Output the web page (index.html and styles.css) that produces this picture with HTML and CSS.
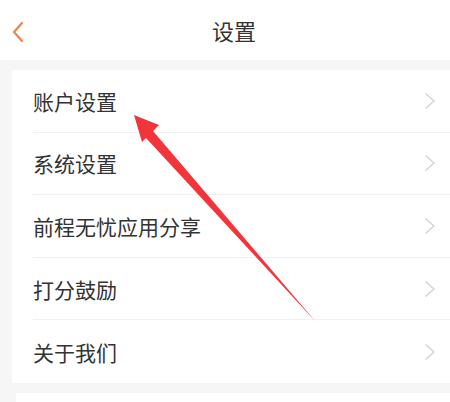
FILE: index.html
```html
<!DOCTYPE html>
<html lang="zh-CN">
<head>
    <meta charset="UTF-8">
    <meta name="viewport" content="width=device-width, initial-scale=1.0">
    <title>设置</title>
    <link rel="stylesheet" href="styles.css">
</head>
<body>
    <div class="page">
        <!-- Header -->
        <div class="header">
            <svg class="back" width="14" height="24" viewBox="0 0 14 24">
                <path d="M11 3 L3 12 L11 21" fill="none" stroke="#ec8550" stroke-width="2.2" stroke-linecap="round" stroke-linejoin="round"/>
            </svg>
            <div class="title">设置</div>
        </div>

        <!-- Settings list -->
        <div class="card">
            <div class="row"><span>账户设置</span><svg class="chev" width="12" height="18" viewBox="0 0 12 18"><path d="M1.5 1.5 L10 9 L1.5 16.5" fill="none" stroke="#d4d4d4" stroke-width="1.5"/></svg></div>
            <div class="row"><span>系统设置</span><svg class="chev" width="12" height="18" viewBox="0 0 12 18"><path d="M1.5 1.5 L10 9 L1.5 16.5" fill="none" stroke="#d4d4d4" stroke-width="1.5"/></svg></div>
            <div class="row"><span>前程无忧应用分享</span><svg class="chev" width="12" height="18" viewBox="0 0 12 18"><path d="M1.5 1.5 L10 9 L1.5 16.5" fill="none" stroke="#d4d4d4" stroke-width="1.5"/></svg></div>
            <div class="row"><span>打分鼓励</span><svg class="chev" width="12" height="18" viewBox="0 0 12 18"><path d="M1.5 1.5 L10 9 L1.5 16.5" fill="none" stroke="#d4d4d4" stroke-width="1.5"/></svg></div>
            <div class="row"><span>关于我们</span><svg class="chev" width="12" height="18" viewBox="0 0 12 18"><path d="M1.5 1.5 L10 9 L1.5 16.5" fill="none" stroke="#d4d4d4" stroke-width="1.5"/></svg></div>
        </div>
        <div class="next"></div>

        <!-- Red arrow annotation -->
        <svg class="arrow" width="450" height="402" viewBox="0 0 450 402">
            <path d="M134 115 L159 125 L153 131 L316 322 L146 138 L142 142 Z" fill="#f2353a"/>
        </svg>
    </div>
</body>
</html>
```

FILE: styles.css
```css
body {
    margin: 0;
    background: #f6f6f6;
    font-family: "Noto Sans CJK SC", "Noto Sans", sans-serif;
}

.page {
    position: relative;
    width: 450px;
    height: 402px;
    overflow: hidden;
}

.header {
    height: 60px;
    background: #fff;
    display: flex;
    align-items: center;
    justify-content: center;
    position: relative;
}

.back {
    position: absolute;
    left: 11px;
    top: 20px;
}

.title {
    font-size: 22px;
    color: #333;
    margin-left: 18px;
}

.card {
    margin: 10px 0 0 12px;
    background: #fff;
    padding-left: 21px;
}

.row {
    height: 62.6px;
    display: flex;
    align-items: center;
    justify-content: space-between;
    border-bottom: 1px solid #f0f0f0;
    box-sizing: border-box;
    font-size: 21px;
    color: #333;
}

.row:last-child {
    border-bottom: none;
}

.chev {
    margin-right: 14px;
}

.next {
    margin: 10px 0 0 16px;
    height: 40px;
    background: #fff;
}

.arrow {
    position: absolute;
    left: 0;
    top: 0;
}
```
